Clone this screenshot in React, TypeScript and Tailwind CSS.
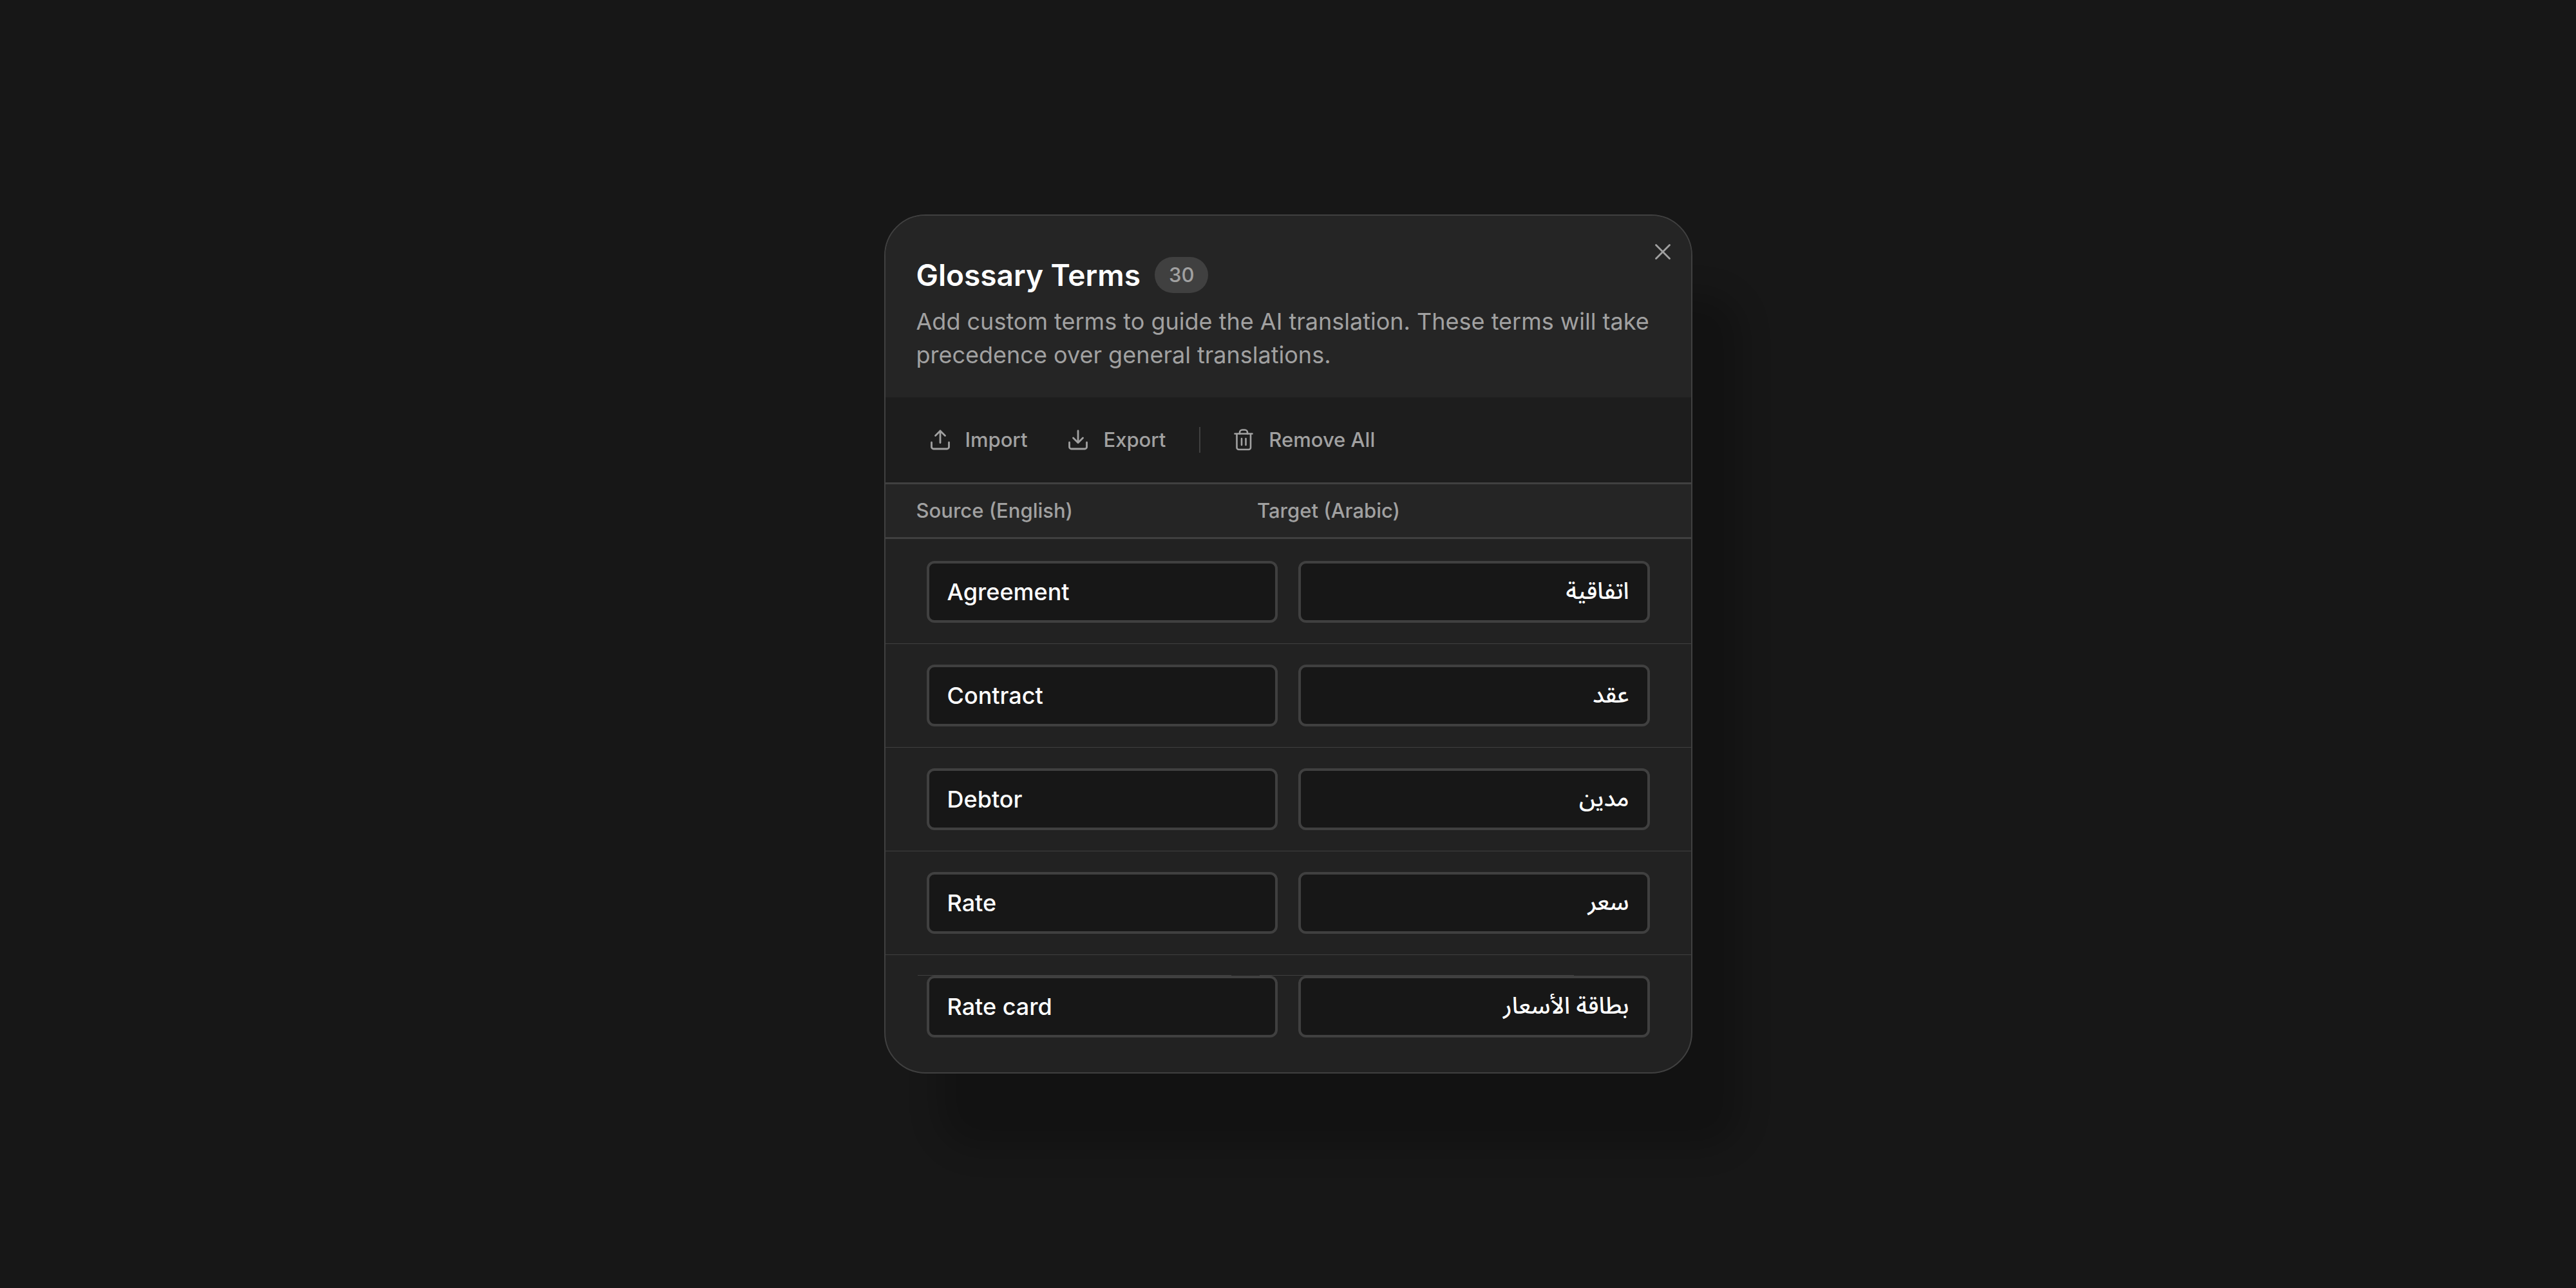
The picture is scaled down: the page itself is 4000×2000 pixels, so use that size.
import React, { useState } from 'react';

interface Term {
  id: number;
  source: string;
  target: string;
}

interface ToolbarButtonProps {
  label: string;
  icon: React.ReactNode;
  onClick?: () => void;
}

const initialTerms: Term[] = [
  { id: 1, source: 'Agreement', target: 'اتفاقية' },
  { id: 2, source: 'Contract', target: 'عقد' },
  { id: 3, source: 'Debtor', target: 'مدين' },
  { id: 4, source: 'Rate', target: 'سعر' },
  { id: 5, source: 'Rate card', target: 'بطاقة الأسعار' },
];

const TrayIcon = ({ direction }: { direction: 'up' | 'down' }) => (
  <svg viewBox="0 0 30 32" className="h-8 w-[30px]" fill="none" stroke="currentColor" strokeWidth="2.8" strokeLinecap="round" strokeLinejoin="round" aria-hidden="true">
    <path d="M1.5 20v7a3 3 0 0 0 3 3h21a3 3 0 0 0 3-3v-7" />
    {direction === 'up' ? <path d="M15 20.500V2M7.500 9.500L15 2l7.500 7.500" /> : <path d="M15 2v18.500M7.500 13l7.500 7.500 7.500-7.500" />}
  </svg>
);

const TrashIcon = () => (
  <svg viewBox="0 0 30 34" className="h-[34px] w-[30px]" fill="none" stroke="currentColor" strokeWidth="2.6" strokeLinecap="round" strokeLinejoin="round" aria-hidden="true">
    <path d="M1.500 7.500h27M4.500 7.500V29a3 3 0 0 0 3 3H23a3 3 0 0 0 3-3V7.500" />
    <path d="M9 7.500V5.500a4 4 0 0 1 4-4h4a4 4 0 0 1 4 4v2" />
    <path d="M12 15v10M18.500 15v10" />
  </svg>
);

const ToolbarButton: React.FC<ToolbarButtonProps> = ({ label, icon, onClick }) => (
  <button type="button" onClick={onClick} className="flex items-center gap-6 text-[31px] leading-10 font-medium">
    {icon}
    {label}
  </button>
);

const inputClass =
  'block h-24 w-full rounded-xl border-4 border-neutral-700 bg-neutral-900 px-7 text-[36px] font-medium text-white outline-none focus:border-neutral-500';

export default function App() {
  const [terms, setTerms] = useState(initialTerms);

  const updateTerm = (id: number, key: 'source' | 'target', value: string) => {
    setTerms(terms.map(term => (term.id === id ? { ...term, [key]: value } : term)));
  };

  return (
    <main className="flex min-h-screen items-center justify-center bg-neutral-900 font-['Inter','Noto_Sans_Arabic','Liberation_Sans',sans-serif] text-neutral-400">
      <section
        role="dialog"
        aria-labelledby="glossary-title"
        className="relative w-full max-w-[1255px] overflow-hidden rounded-[64px] border-2 border-neutral-700 bg-[#222222] shadow-[80px_120px_48px_-4px_rgba(0,0,0,0.2)]"
      >
        <header className="bg-[#252525] px-12 pt-16 pb-10">
          <div className="flex items-center gap-[22px]">
            <h1 id="glossary-title" className="text-[46px] leading-[56px] font-semibold text-white">
              Glossary Terms
            </h1>
            <span className="rounded-full bg-neutral-700 px-[22px] py-2 text-[31px] leading-10 font-medium">30</span>
          </div>
          <p className="mt-[18px] text-[36px] leading-[52px]">
            Add custom terms to guide the AI translation. These terms will take precedence over general translations.
          </p>
          <button type="button" aria-label="Close" className="absolute top-10 right-7 p-1">
            <svg viewBox="0 0 24 24" className="size-6" fill="none" stroke="currentColor" strokeWidth="2.8" strokeLinecap="round" aria-hidden="true">
              <path d="M1.500 1.500l21 21M22.500 1.500l-21 21" />
            </svg>
          </button>
        </header>

        <div className="flex items-center gap-[52px] bg-[#1d1d1d] px-[70px] py-[46px]">
          <div className="flex gap-16">
            <ToolbarButton label="Import" icon={<TrayIcon direction="up" />} />
            <ToolbarButton label="Export" icon={<TrayIcon direction="down" />} />
          </div>
          <div className="h-10 w-0.5 bg-neutral-700" />
          <ToolbarButton label="Remove All" icon={<TrashIcon />} onClick={() => setTerms([])} />
        </div>

        <table className="block">
          <thead className="block">
            <tr className="grid grid-cols-[1fr_1fr_96px] border-y-3 border-neutral-700 bg-[#252525] px-12 py-5 text-left text-[31px] leading-[42px]">
              <th className="font-medium">Source (English)</th>
              <th className="font-medium">Target (Arabic)</th>
            </tr>
          </thead>
          <tbody className="block pt-0.5 pb-[22px]">
            {terms.map((term, index) => (
              <tr key={term.id} className="relative grid grid-cols-2 gap-8 border-b border-neutral-700 px-16 py-8 last:border-b-0">
                <td>
                  {/* top edge of the empty row that peeks out behind the last one */}
                  {index === terms.length - 1 && (
                    <div className="absolute top-[31px] right-[182px] left-[50px] flex gap-11">
                      <div className="h-px flex-1 bg-neutral-700" />
                      <div className="h-px flex-1 bg-neutral-700" />
                    </div>
                  )}
                  <input
                    aria-label="Source term"
                    className={inputClass}
                    value={term.source}
                    onChange={e => updateTerm(term.id, 'source', e.target.value)}
                  />
                </td>
                <td>
                  <input
                    aria-label="Target term"
                    dir="rtl"
                    className={inputClass}
                    value={term.target}
                    onChange={e => updateTerm(term.id, 'target', e.target.value)}
                  />
                </td>
              </tr>
            ))}
          </tbody>
        </table>
      </section>
    </main>
  );
}
